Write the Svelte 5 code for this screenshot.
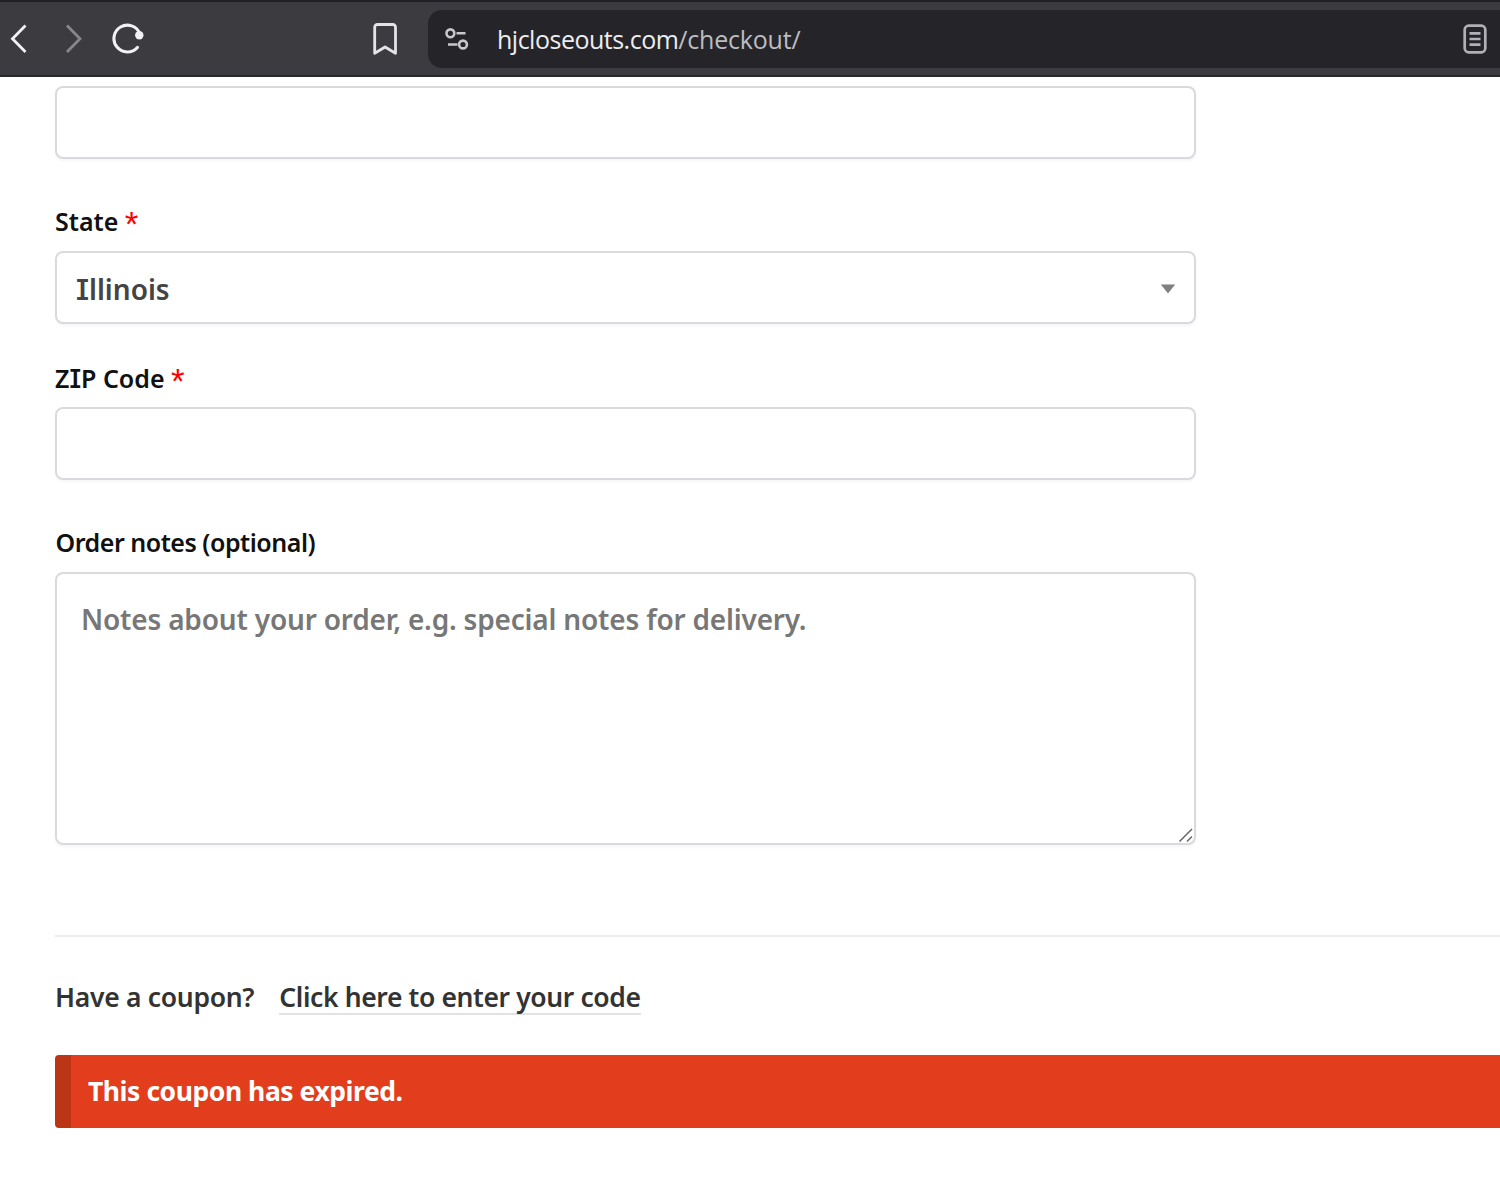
<script lang="ts">
  let city = $state('');
  let zip = $state('');
  let notes = $state('');
</script>

<div class="page">
  <header class="toolbar">
    <nav class="nav">
      <svg class="back" width="18" height="32" viewBox="0 0 18 32"><path d="M15.5 2.5 2.5 15.7l13 13.2" /></svg>
      <svg class="forward" width="18" height="32" viewBox="0 0 18 32"><path d="m2 2.5 13 13.2L2 28.9" /></svg>
      <svg class="reload" width="34" height="32" viewBox="0 0 34 32">
        <path d="M28.8 10.6A13.4 13.4 0 1 0 26.4 24.4" />
        <circle cx="28.3" cy="12.2" r="4.2" />
      </svg>
      <svg class="bookmark" width="26" height="34" viewBox="0 0 26 34">
        <path d="M5.5 2.5h15.2a2.8 2.8 0 0 1 2.8 2.8v26L13.1 25 2.7 31.3v-26a2.8 2.8 0 0 1 2.8-2.8Z" />
      </svg>
    </nav>
    <div class="address">
      <svg class="tune" width="24" height="24" viewBox="0 0 24 24">
        <circle cx="5.4" cy="6.3" r="3.9" />
        <path d="M11.5 6.3H20.5M3 17.5h9.5" />
        <circle cx="18" cy="17.5" r="3.9" />
      </svg>
      <span class="url"><span class="host">hjcloseouts.com</span>/checkout/</span>
      <svg class="reader" width="24" height="30" viewBox="0 0 24 30">
        <rect x="1.7" y="1.7" width="20.6" height="26.6" rx="4" />
        <path d="M6.5 9.3h11M6.5 15h11M6.5 20.7h11" />
      </svg>
    </div>
  </header>

  <main class="checkout">
    <input class="field" type="text" aria-label="City" bind:value={city} />

    <div class="label state-label">State <span class="required">*</span></div>
    <div class="field select">
      <span><span class="slab">I</span>llinois</span>
      <svg width="16" height="10" viewBox="0 0 16 10"><path d="M.8.5h14.4L8 9.5Z" /></svg>
    </div>

    <label class="label zip-label" for="zip">Z<span class="slab">I</span>P Code <span class="required">*</span></label>
    <input class="field" id="zip" type="text" bind:value={zip} />

    <label class="label notes-label" for="notes">Order notes (optional)</label>
    <div class="notes-box">
      <textarea
        class="field notes"
        id="notes"
        placeholder="Notes about your order, e.g. special notes for delivery."
        bind:value={notes}
      ></textarea>
      <svg class="grip" width="16" height="16" viewBox="0 0 16 16"><path d="M1.5 14.5 14 2M9 14.5l5-5" /></svg>
    </div>

    <section class="coupon">
      <span class="question">Have a coupon?</span>
      <a class="toggle" href="#coupon">Click here to enter your code</a>
    </section>

    <div class="alert" role="alert">This coupon has expired.</div>
  </main>
</div>

<style>
  :global(body) {
    margin: 0;
    background: #fff;
  }
  .page {
    height: 1179px;
    overflow: hidden;
    background: #fff;
    font-family: 'Noto Sans', sans-serif;
    font-weight: 600;
  }
  svg {
    display: block;
    flex: none;
    fill: none;
    stroke: #f2f1f4;
    stroke-width: 2.8;
  }
  .toolbar {
    display: flex;
    box-sizing: border-box;
    height: 77px;
    padding: 8px 0 7px;
    border-top: 2px solid #211f26;
    border-bottom: 2px solid #29282d;
    background: #3c3b40;
  }
  .nav {
    display: flex;
    align-items: center;
    width: 428px;
  }
  .back {
    margin-left: 10px;
  }
  .forward {
    margin-left: 37px;
    stroke: #87868b;
  }
  .reload {
    margin-left: 28px;
  }
  .reload path {
    stroke-linecap: round;
    stroke-width: 3.1;
  }
  .reload circle {
    fill: #f2f1f4;
    stroke: none;
  }
  .bookmark {
    margin-left: 227px;
    stroke: #e4e3e8;
    stroke-linejoin: round;
  }
  .address {
    display: flex;
    flex: 1;
    align-items: center;
    border-radius: 14px 0 0 14px;
    background: #252428;
  }
  .tune {
    margin-left: 17px;
    stroke: #c8c7cc;
    stroke-width: 2.6;
  }
  .url {
    flex: 1;
    margin-left: 28px;
    color: #bdbcc2;
    font-family: 'Open Sans', sans-serif;
    font-size: 25px;
    font-weight: 400;
    letter-spacing: -0.2px;
  }
  .host {
    color: #ededf0;
    letter-spacing: -0.5px;
  }
  .reader {
    margin-right: 13px;
    stroke: #b1b0b5;
    stroke-width: 2.7;
  }
  .checkout {
    padding: 9px 0 0 55px;
  }
  .field {
    display: block;
    box-sizing: border-box;
    width: 1141px;
    height: 73px;
    margin: 0;
    border: 2px solid #d9dae0;
    border-radius: 8px;
    outline: none;
    background: #fff;
    box-shadow: 0 2px 3px rgb(0 0 0 / 4%);
    font: inherit;
    font-size: 28px;
  }
  .label {
    display: block;
    height: 34px;
    color: #111;
    font-size: 25px;
    line-height: 34px;
    white-space: nowrap;
  }
  .state-label {
    padding: 45px 0 12.5px;
  }
  .zip-label {
    padding: 37px 0 12.5px;
  }
  .notes-label {
    padding: 45px 0 12.5px;
    text-indent: 0.5px;
    letter-spacing: -0.48px;
  }
  .required {
    color: #f00;
    font-family: 'Liberation Sans', sans-serif;
    font-size: 35px;
    font-weight: 400;
    line-height: 0;
    vertical-align: -5px;
  }
  .slab {
    font-family: Inter, sans-serif;
    font-feature-settings: 'cv08';
  }
  .select {
    display: flex;
    align-items: center;
    justify-content: space-between;
    padding: 3px 18px 0 19px;
    color: #444;
  }
  .select svg {
    fill: #808080;
    stroke: none;
  }
  .notes-box {
    position: relative;
    width: 1141px;
  }
  .notes {
    height: 273px;
    padding: 26px 24px;
    line-height: 38px;
    letter-spacing: -0.19px;
    resize: none;
  }
  .notes::placeholder {
    color: #777;
    opacity: 1;
  }
  .grip {
    position: absolute;
    right: 2px;
    bottom: 2px;
    stroke: #666;
    stroke-width: 1.5;
  }
  .coupon {
    display: flex;
    align-items: flex-start;
    gap: 25px;
    height: 118px;
    margin-top: 90px;
    border-top: 2px solid #ececec;
    color: #333;
    font-size: 26.5px;
    line-height: 36px;
    white-space: nowrap;
  }
  .question {
    margin-top: 42px;
    letter-spacing: -0.3px;
  }
  .toggle {
    height: 34px;
    margin-top: 42px;
    border-bottom: 2px solid #e2e2e2;
    color: inherit;
    letter-spacing: -0.38px;
    text-decoration: none;
  }
  .alert {
    box-sizing: border-box;
    height: 73px;
    padding-left: 17px;
    border-left: 16px solid #bd3517;
    border-radius: 4px 0 0 4px;
    background: #e23e1d;
    color: #fff;
    font-size: 26.5px;
    font-weight: 700;
    line-height: 73px;
    letter-spacing: -0.45px;
  }
</style>
